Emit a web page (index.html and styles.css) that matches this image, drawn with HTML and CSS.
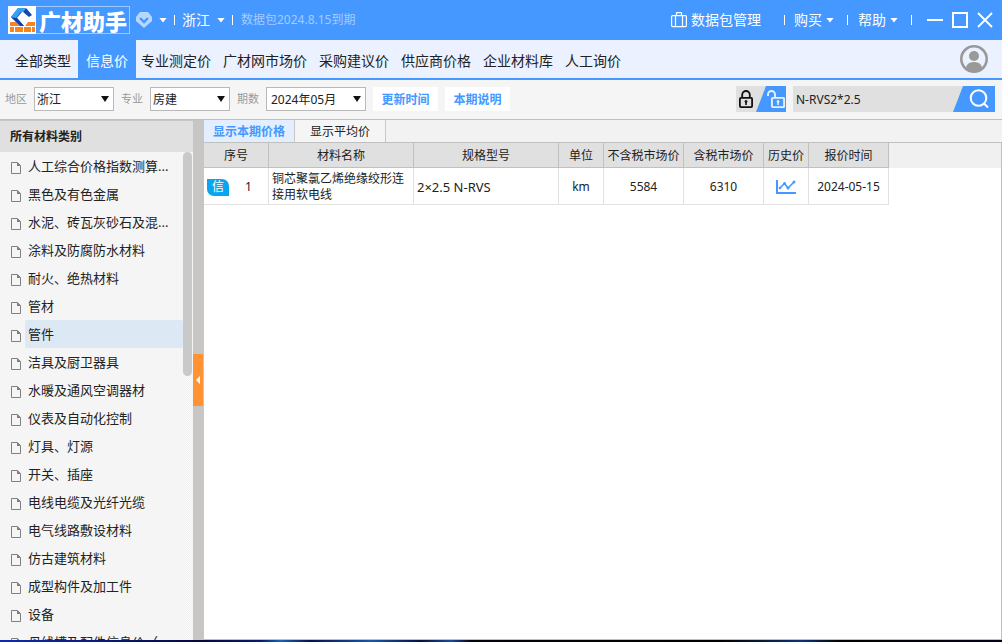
FILE: index.html
```html
<!DOCTYPE html>
<html lang="zh-CN">
<head>
<meta charset="utf-8">
<meta name="viewport" content="width=device-width, initial-scale=1">
<title>广材助手</title>
<link rel="stylesheet" href="styles.css">
</head>
<body>
<div class="app">
  <header class="titlebar">
    <div class="brand">
      <svg class="brand-mark" viewBox="0 0 28 28" aria-hidden="true">
        <rect width="28" height="28" fill="#fff"/>
        <path d="M2 16h6l4 4H2zM20 16h7v4H17zM2 21h4v5H2zM7 21h8v5H7zM16 21h7v5h-7zM24 21h3v5h-3z" fill="#f8841d"/>
        <path d="M10 2l4 4-5 6 7 8h-3L3 11z" fill="#1d6fe0"/>
        <path d="M3 11l6 1 7 8h-4z" fill="#0d3fae"/>
        <path d="M10 2h8l-3 4h-3L8 12l-5-1z" fill="#35a3f2"/>
        <path d="M18 2l6 7-3 2-6-5z" fill="#1048b8"/>
      </svg>
      <span class="brand-name">广材助手</span>
    </div>
    <button class="tb-btn member" aria-label="会员">
      <svg width="16" height="16" viewBox="0 0 16 16" aria-hidden="true">
        <path d="M4 0h8l4 5v4l-8 7-8-7V5z" fill="#b7d7ff"/>
        <path d="M4 6l4 4 4-4" fill="none" stroke="#4498ff" stroke-width="2.4"/>
      </svg>
      <span class="caret"></span>
    </button>
    <span class="divider"></span>
    <button class="tb-btn">浙江<span class="caret"></span></button>
    <span class="divider"></span>
    <span class="expiry">数据包2024.8.15到期</span>
    <div class="titlebar-right">
      <button class="tb-btn manage">
        <svg width="16" height="16" viewBox="0 0 16 16" fill="none" stroke="#fff" stroke-width="1.2" aria-hidden="true">
          <rect x=".6" y="3.6" width="14.8" height="11" rx="1"/>
          <path d="M4.5 3.600v11M11.500 3.600v11M5.500 3.500V1q0-.4.4-.4h4.200q.4 0 .4.400v2.500"/>
        </svg>数据包管理
      </button>
      <span class="divider wide"></span>
      <button class="tb-btn menu">购买<span class="caret"></span></button>
      <span class="divider"></span>
      <button class="tb-btn menu">帮助<span class="caret"></span></button>
      <span class="divider"></span>
      <div class="window-controls">
        <button class="tb-btn" aria-label="最小化"><svg width="16" height="16" viewBox="0 0 16 16" stroke="#fff" stroke-width="2" aria-hidden="true"><path d="M0 8h16"/></svg></button>
        <button class="tb-btn" aria-label="最大化"><svg width="16" height="16" viewBox="0 0 16 16" fill="none" stroke="#fff" stroke-width="2" aria-hidden="true"><rect x="1" y="1" width="14" height="14"/></svg></button>
        <button class="tb-btn" aria-label="关闭"><svg width="16" height="16" viewBox="0 0 16 16" stroke="#fff" stroke-width="1.800" aria-hidden="true"><path d="M1 1l14 14M15 1L1 15"/></svg></button>
      </div>
    </div>
  </header>

  <nav class="nav">
    <a href="#all">全部类型</a>
    <a href="#info" class="active">信息价</a>
    <a href="#pro">专业测定价</a>
    <a href="#market">广材网市场价</a>
    <a href="#purchase">采购建议价</a>
    <a href="#supplier">供应商价格</a>
    <a href="#library">企业材料库</a>
    <a href="#inquiry">人工询价</a>
    <button class="avatar" aria-label="账户">
      <svg width="28" height="28" viewBox="0 0 28 28" aria-hidden="true">
        <circle cx="14" cy="14" r="12.700" fill="none" stroke="#999" stroke-width="2.600"/>
        <circle cx="14" cy="11" r="5" fill="#999"/>
        <path d="M6 24q0-7 8-7t8 7l-3 2.500H9z" fill="#999"/>
      </svg>
    </button>
  </nav>

  <form class="filters">
    <label for="region">地区</label>
    <span class="select"><select id="region"><option>浙江</option></select></span>
    <label for="major">专业</label>
    <span class="select"><select id="major"><option>房建</option></select></span>
    <label for="period">期数</label>
    <span class="select period"><select id="period"><option>2024年05月</option></select></span>
    <button type="button" class="action">更新时间</button>
    <button type="button" class="action">本期说明</button>
    <div class="lock-switch">
      <button type="button" class="lock" aria-label="锁定">
        <svg width="14" height="18" viewBox="0 0 14 18" fill="none" stroke="#111" aria-hidden="true">
          <path d="M3.200 8V4.800a3.800 3.800 0 0 1 7.600 0V8" stroke-width="1.800"/>
          <rect x=".9" y="7.900" width="12.200" height="9.200" rx="1" stroke-width="1.800"/>
          <path d="M7 12v3" stroke-width="1.600"/><circle cx="7" cy="11.500" r="1" fill="#111"/>
        </svg>
      </button>
      <button type="button" class="unlock" aria-label="解锁">
        <svg width="18" height="18" viewBox="0 0 18 18" fill="none" stroke="#e6f1ff" aria-hidden="true">
          <path d="M1 6V4.500a3.500 3.500 0 0 1 7 0V8" stroke-width="1.900"/>
          <rect x="4.900" y="7.900" width="12.200" height="9.200" rx="1" stroke-width="1.900"/>
          <path d="M11 12v3" stroke-width="1.600"/><circle cx="11" cy="11.500" r="1" fill="#e6f1ff"/>
        </svg>
      </button>
    </div>
    <div class="search">
      <input type="text" aria-label="搜索材料" value="N-RVS2*2.5">
      <button type="button" aria-label="搜索">
        <svg width="20" height="20" viewBox="0 0 20 20" fill="none" stroke="#fff" stroke-width="2" aria-hidden="true">
          <circle cx="9.500" cy="9" r="7.800"/><path d="M15 14.500l4 4"/>
        </svg>
      </button>
    </div>
  </form>

  <svg class="symbols" aria-hidden="true">
    <symbol id="doc" viewBox="0 0 10 12"><path d="M.5.5h6l3 3v8h-9z" fill="none" stroke="#808080"/><path d="M6 0v4h4z" fill="#808080"/></symbol>
  </svg>

  <main class="main">
    <aside class="sidebar">
      <h2>所有材料类别</h2>
      <div class="tree">
        <ul>
          <li><svg><use href="#doc"/></svg><a href="#c1">人工综合价格指数测算...</a></li>
          <li><svg><use href="#doc"/></svg><a href="#c2">黑色及有色金属</a></li>
          <li><svg><use href="#doc"/></svg><a href="#c3">水泥、砖瓦灰砂石及混...</a></li>
          <li><svg><use href="#doc"/></svg><a href="#c4">涂料及防腐防水材料</a></li>
          <li><svg><use href="#doc"/></svg><a href="#c5">耐火、绝热材料</a></li>
          <li><svg><use href="#doc"/></svg><a href="#c6">管材</a></li>
          <li><svg><use href="#doc"/></svg><a href="#c7" class="selected">管件</a></li>
          <li><svg><use href="#doc"/></svg><a href="#c8">洁具及厨卫器具</a></li>
          <li><svg><use href="#doc"/></svg><a href="#c9">水暖及通风空调器材</a></li>
          <li><svg><use href="#doc"/></svg><a href="#c10">仪表及自动化控制</a></li>
          <li><svg><use href="#doc"/></svg><a href="#c11">灯具、灯源</a></li>
          <li><svg><use href="#doc"/></svg><a href="#c12">开关、插座</a></li>
          <li><svg><use href="#doc"/></svg><a href="#c13">电线电缆及光纤光缆</a></li>
          <li><svg><use href="#doc"/></svg><a href="#c14">电气线路敷设材料</a></li>
          <li><svg><use href="#doc"/></svg><a href="#c15">仿古建筑材料</a></li>
          <li><svg><use href="#doc"/></svg><a href="#c16">成型构件及加工件</a></li>
          <li><svg><use href="#doc"/></svg><a href="#c17">设备</a></li>
          <li><svg><use href="#doc"/></svg><a href="#c18">母线槽及配件信息价（...</a></li>
        </ul>
        <div class="scrollbar"><div class="thumb"></div></div>
      </div>
    </aside>
    <div class="splitter"><button aria-label="收起侧栏"></button></div>
    <section class="content">
      <div class="tabs">
        <button class="current">显示本期价格</button>
        <button>显示平均价</button>
      </div>
      <div class="grid">
        <table>
          <colgroup><col class="c-no"><col class="c-text"><col class="c-text"><col class="c-small"><col class="c-mid"><col class="c-mid"><col class="c-small"><col class="c-mid"></colgroup>
          <thead>
            <tr><th>序号</th><th>材料名称</th><th>规格型号</th><th>单位</th><th>不含税市场价</th><th>含税市场价</th><th>历史价</th><th>报价时间</th></tr>
          </thead>
          <tbody>
            <tr>
              <td><div class="number"><span class="badge">信</span><span>1</span></div></td>
              <td class="left">铜芯聚氯乙烯绝缘绞形连接用软电线</td>
              <td class="left spec">2×2.5 N-RVS</td>
              <td>km</td>
              <td>5584</td>
              <td>6310</td>
              <td>
                <button class="history" aria-label="历史价">
                  <svg width="20" height="14" viewBox="0 0 20 14" fill="none" stroke="#4498ff" aria-hidden="true">
                    <path d="M1 0v13h19" stroke-width="2"/>
                    <path d="M4 8l4.500-4.500L12 8l6-6" stroke-width="1.500"/>
                    <g fill="#4498ff" stroke="none"><circle cx="4" cy="8" r="1.300"/><circle cx="8.500" cy="3.500" r="1.500"/><circle cx="12" cy="8" r="1.500"/><circle cx="18" cy="2" r="1.500"/></g>
                  </svg>
                </button>
              </td>
              <td>2024-05-15</td>
            </tr>
          </tbody>
        </table>
      </div>
    </section>
  </main>
  <div class="desktop-edge"></div>
</div>
</body>
</html>
```
FILE: styles.css
```css
* { box-sizing: border-box; }

body {
  margin: 0;
  font: 12px/16px "Noto Sans", "Noto Sans CJK SC", sans-serif;
  color: #222;
}

button, input, select {
  margin: 0;
  padding: 0;
  border: 0;
  border-radius: 0;
  background: none;
  font: inherit;
  color: inherit;
}

svg { display: block; flex: none; }
a { color: inherit; text-decoration: none; }

.app {
  display: flex;
  flex-direction: column;
  height: 100vh;
  overflow: hidden;
  background: #f5f5f5;
}

.symbols { position: absolute; width: 0; height: 0; }

/* Title bar */
.titlebar {
  display: flex;
  align-items: center;
  flex: none;
  height: 40px;
  padding: 0 9px 0 8px;
  background: #4498ff;
  color: #fff;
  font-size: 14px;
  white-space: nowrap;
}

.brand {
  display: flex;
  align-items: center;
  width: 122px;
  height: 28px;
  margin-right: 6px;
  border: 1px solid #9ccaff;
  border-left: 0;
}
.brand-mark { width: 28px; height: 28px; }
.brand-name {
  margin-left: 3px;
  font: oblique 6deg 900 22px/26px "Noto Sans CJK SC", sans-serif;
}

.tb-btn { display: flex; align-items: center; gap: 7px; }
.tb-btn.manage, .tb-btn.menu { gap: 4px; }

.caret {
  width: 8px;
  height: 5px;
  background: #fff;
  clip-path: polygon(0 0, 100% 0, 50% 100%);
}

.divider {
  width: 1px;
  height: 10px;
  margin: 0 7px;
  background: #fff;
}
.expiry { margin-left: 1px; font-size: 12px; color: #a3ccff; }

.titlebar-right { display: flex; align-items: center; margin-left: auto; }
.titlebar-right .divider { margin: 0 10px 0 13px; }
.titlebar-right .divider.wide { margin: 0 9px 0 23px; }
.window-controls { display: flex; gap: 9px; margin-left: 5px; }

/* Main navigation */
.nav {
  display: flex;
  flex: none;
  height: 40px;
  padding: 0 14px 0 10px;
  border-bottom: 2px solid #4498ff;
  background: #ebf1ff;
  font-size: 14px;
  line-height: 42px;
  white-space: nowrap;
}
.nav a { padding: 0 7px 0 5px; }
.nav a.active { padding: 0 8px; background: #4498ff; color: #fff; }
.avatar { margin-left: auto; }

/* Filters */
.filters {
  display: flex;
  align-items: center;
  gap: 7px;
  flex: none;
  height: 40px;
  padding: 0 7px 1px 5px;
  border-bottom: 1px solid #c0c0c0;
}
.filters label { font-size: 11px; color: #999; white-space: nowrap; }

.select { display: flex; position: relative; width: 80px; height: 24px; }
.select.period { width: 100px; }
.select select {
  width: 100%;
  padding: 2px 0 0 2px;
  border: 1px solid #b9b9b9;
  background: #fff;
  appearance: none;
}
.select.period select { padding-left: 4px; }
.select::after {
  content: "";
  position: absolute;
  top: 9px;
  right: 5px;
  width: 8px;
  height: 6px;
  background: #111;
  clip-path: polygon(0 0, 100% 0, 50% 100%);
  pointer-events: none;
}

.action {
  width: 65px;
  height: 24px;
  padding-top: 2px;
  background: #fff;
  color: #4498ff;
  font-weight: 700;
}

.lock-switch { display: flex; height: 26px; margin-left: auto; background: #e0e0e0; }
.lock { width: 20px; padding-left: 3px; }
.unlock {
  width: 30px;
  padding-left: 11px;
  background: #4498ff;
  clip-path: polygon(10px 0, 100% 0, 100% 100%, 0 100%);
}

.search { display: flex; width: 202px; height: 26px; background: #e0e0e0; }
.search input { flex: 1; min-width: 0; padding: 2px 0 0 3px; }
.search button {
  width: 42px;
  padding-left: 16px;
  background: #4498ff;
  clip-path: polygon(10px 0, 100% 0, 100% 100%, 0 100%);
}

/* Sidebar */
.main { display: flex; flex: 1; min-height: 0; }

.sidebar { display: flex; flex-direction: column; flex: none; width: 193px; }
.sidebar h2 {
  flex: none;
  margin: 0;
  padding: 0 10px;
  border-top: 1px solid #c8c8c8;
  background: #e0e0e0;
  font-size: 12px;
  line-height: 31px;
}
.tree { display: flex; flex: 1; min-height: 0; overflow: hidden; }
.tree ul { flex: 1; min-width: 0; margin: 0; padding: 0; list-style: none; }
.tree li { display: flex; align-items: center; gap: 4px; height: 28px; padding-left: 11px; }
.tree li svg { width: 10px; height: 12px; margin-top: 4px; }
.tree li a {
  flex: 1;
  padding-left: 3px;
  border-radius: 2px;
  font-size: 13px;
  line-height: 28px;
  white-space: nowrap;
}
.tree a.selected { background: #dce9f5; }
.scrollbar {
  width: 10px;
  padding-right: 1px;
  background: repeating-conic-gradient(#f0f0f0 0 25%, #fafafa 0 50%) 0 0 / 2px 2px;
}
.thumb { height: 46%; border-radius: 5px; background: #c9c9c9; }

.splitter {
  display: flex;
  align-items: center;
  flex: none;
  width: 11px;
  background: #c8c6c4;
}
.splitter button {
  display: flex;
  align-items: center;
  width: 10px;
  height: 52px;
  padding-left: 3px;
  background: #ff9233;
}
.splitter button::before {
  content: "";
  width: 4px;
  height: 8px;
  background: #fff;
  clip-path: polygon(100% 0, 100% 100%, 0 50%);
}

/* Price table */
.content { display: flex; flex-direction: column; flex: 1; min-width: 0; background: #fff; }
.tabs { display: flex; flex: none; height: 22px; background: #f2f2f2; }
.tabs button { width: 91px; padding-top: 2px; border-right: 1px solid #c8c8c8; background: #f5f5f5; }
.tabs .current { background: #e3efff; color: #4498ff; font-weight: 700; }

.grid {
  flex: 1;
  border: solid #c0c0c0;
  border-width: 1px 1px 1px 0;
  background: linear-gradient(#f0f0f0, #f0f0f0) 0 0 / 100% 25px no-repeat;
}

table { width: 685px; border-spacing: 0; table-layout: fixed; background: #fff; }
.c-no { width: 65px; }
.c-text { width: 145px; }
.c-small { width: 45px; }
.c-mid { width: 80px; }

th {
  height: 25px;
  padding: 2px 0 0;
  border: solid #c0c0c0;
  border-width: 0 1px 1px 0;
  background: #e0e0e0;
  font-weight: 400;
  white-space: nowrap;
}
td {
  height: 37px;
  padding: 2px 0 0;
  border: solid #e2e2e2;
  border-width: 0 1px 1px 0;
  text-align: center;
}
td.left { padding: 2px 3px 0; text-align: left; }
td.spec { font-size: 13px; }

.number { display: flex; align-items: center; gap: 16px; padding-left: 3px; }
.badge {
  width: 22px;
  height: 17px;
  border-radius: 0 7px 0 7px;
  background: #09a5ee;
  color: #fff;
}
.history { display: block; margin: 0 auto; }

.desktop-edge {
  flex: none;
  height: 2px;
  background: linear-gradient(90deg, #0c2bb4, #05093c 20%, #071a6a 26%, #1763b8 28%, #06114a 31%, #1558ad 37%, #06103c 42%, #174c9e 45%, #02030c 47%, #000 72%, #0b3277 80%, #000 84%, #02041c);
}
```
